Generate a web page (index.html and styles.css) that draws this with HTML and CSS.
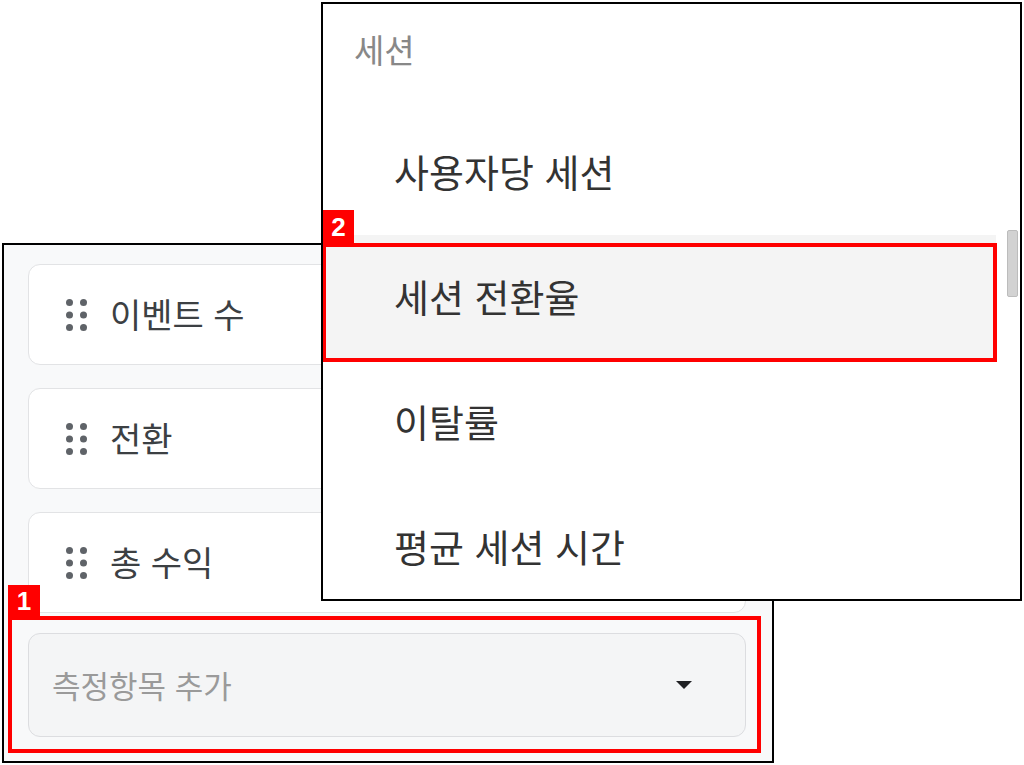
FILE: index.html
```html
<!DOCTYPE html>
<html lang="ko">
<head>
    <meta charset="UTF-8">
    <meta name="viewport" content="width=device-width, initial-scale=1.0">
    <title>측정항목 추가</title>
    <link rel="stylesheet" href="styles.css">
</head>
<body>
    <div class="stage">
        <div class="panel">
            <div class="metric-card">
                <svg class="handle" width="21" height="32" viewBox="0 0 21 32">
                    <circle cx="3.5" cy="3.5" r="3.5"/><circle cx="17.5" cy="3.5" r="3.5"/>
                    <circle cx="3.5" cy="16" r="3.5"/><circle cx="17.5" cy="16" r="3.5"/>
                    <circle cx="3.5" cy="28.5" r="3.5"/><circle cx="17.5" cy="28.5" r="3.5"/>
                </svg>
                <span>이벤트 수</span>
            </div>
            <div class="metric-card">
                <svg class="handle" width="21" height="32" viewBox="0 0 21 32">
                    <circle cx="3.5" cy="3.5" r="3.5"/><circle cx="17.5" cy="3.5" r="3.5"/>
                    <circle cx="3.5" cy="16" r="3.5"/><circle cx="17.5" cy="16" r="3.5"/>
                    <circle cx="3.5" cy="28.5" r="3.5"/><circle cx="17.5" cy="28.5" r="3.5"/>
                </svg>
                <span>전환</span>
            </div>
            <div class="metric-card">
                <svg class="handle" width="21" height="32" viewBox="0 0 21 32">
                    <circle cx="3.5" cy="3.5" r="3.5"/><circle cx="17.5" cy="3.5" r="3.5"/>
                    <circle cx="3.5" cy="16" r="3.5"/><circle cx="17.5" cy="16" r="3.5"/>
                    <circle cx="3.5" cy="28.5" r="3.5"/><circle cx="17.5" cy="28.5" r="3.5"/>
                </svg>
                <span>총 수익</span>
            </div>

            <div class="callout callout-add">
                <span class="callout-num">1</span>
                <div class="metric-select">
                    <span class="placeholder">측정항목 추가</span>
                    <svg class="caret" width="16" height="8" viewBox="0 0 16 8"><path d="M0 0H16L8 8Z"/></svg>
                </div>
            </div>
        </div>

        <div class="menu">
            <div class="menu-header">세션</div>
            <div class="menu-item">사용자당 세션</div>
            <div class="menu-item active">세션 전환율</div>
            <div class="menu-item">이탈률</div>
            <div class="menu-item">평균 세션 시간</div>

            <div class="callout callout-item">
                <span class="callout-num">2</span>
            </div>
            <div class="scroll-thumb"></div>
        </div>
    </div>
</body>
</html>
```

FILE: styles.css
```css
body {
    margin: 0;
    background: #fff;
    font-family: "Noto Sans CJK KR", "Noto Sans", sans-serif;
    color: #333;
}
.stage {
    position: relative;
    width: 1024px;
    height: 765px;
    overflow: hidden;
}
.panel {
    box-sizing: border-box;
    margin: 243px 0 0 2px;
    width: 772px;
    height: 520px;
    border: 2px solid #000;
    background: #f8f9fa;
    padding: 19px 26px 0 24px;
}
.metric-card {
    box-sizing: border-box;
    height: 101px;
    margin-bottom: 23px;
    background: #fff;
    border: 1px solid #e2e3e5;
    border-radius: 12px;
    display: flex;
    align-items: center;
    padding: 0 0 2px 37px;
    font-size: 34px;
    color: #3c4043;
}
.metric-card:nth-child(3) {
    margin-bottom: 0;
}
.handle {
    fill: #5f6368;
    margin: 2px 23px 0 0;
}
.callout {
    position: relative;
    border: 4px solid #ff0000;
}
.callout-num {
    position: absolute;
    background: #ff0000;
    color: #fff;
    font-family: "Liberation Sans", Arial, sans-serif;
    font-weight: bold;
    font-size: 26px;
    line-height: 32px;
    text-align: center;
}
.callout-add {
    margin: 3px -15px 0 -20px;
    padding: 13px 11px 12px 16px;
}
.callout-add .callout-num {
    left: -4px;
    top: -35px;
    width: 32px;
    height: 31px;
}
.metric-select {
    box-sizing: border-box;
    height: 104px;
    background: #f4f5f6;
    border: 1px solid #dcdde0;
    border-radius: 12px;
    display: flex;
    align-items: center;
    justify-content: space-between;
    padding: 0 53px 2px 23px;
}
.placeholder {
    font-size: 31px;
    color: #9a9a9a;
}
.caret {
    fill: #202124;
    margin-top: 2px;
}
.menu {
    position: absolute;
    left: 321px;
    top: 2px;
    box-sizing: border-box;
    width: 701px;
    height: 599px;
    border: 2px solid #000;
    background: #fff;
    padding-right: 24px;
    overflow: hidden;
}
.menu-header {
    box-sizing: border-box;
    height: 106px;
    padding: 23px 0 0 31px;
    font-size: 33px;
    line-height: 44px;
    color: #888;
}
.menu-item {
    box-sizing: border-box;
    height: 125px;
    display: flex;
    align-items: center;
    padding: 0 0 4px 71px;
    font-size: 38px;
    color: #333;
}
.menu-item.active {
    background: #f4f4f4;
}
.callout-item {
    position: absolute;
    left: -1px;
    top: 239px;
    width: 675px;
    height: 119px;
    box-sizing: border-box;
}
.callout-item .callout-num {
    left: -3px;
    top: -37px;
    width: 31px;
    height: 33px;
    line-height: 34px;
}
.scroll-thumb {
    position: absolute;
    left: 684px;
    top: 226px;
    width: 11px;
    height: 67px;
    box-sizing: border-box;
    background: #d2d2d2;
    border: 1px solid #bcbcbc;
    border-radius: 2px;
}
```
